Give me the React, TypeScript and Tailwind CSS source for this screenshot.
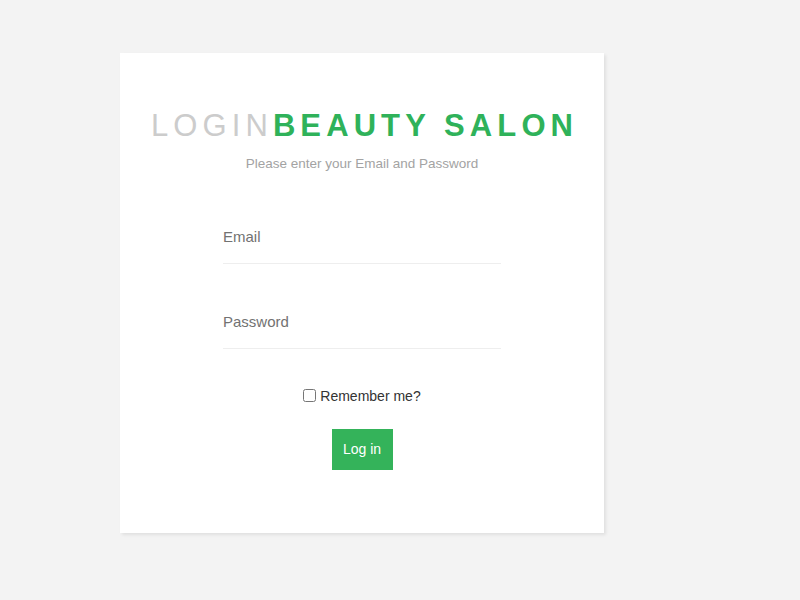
import React from "react";

const font = { fontFamily: '"Liberation Sans", Arial, sans-serif' };

const App = () => {
  return (
    <div
      className="w-[800px] h-[600px] bg-[#f3f3f3] pt-[53px] pl-[120px]"
      style={font}
    >
      <div className="w-[484px] h-[480px] bg-white shadow-[2px_2px_3px_rgba(0,0,0,0.08)] flex flex-col items-center pt-[57px]">
        <h1 className="text-[31px] leading-none tracking-[5.1px] whitespace-nowrap pl-[5px]">
          <span className="text-[#cccccc] font-normal">LOGIN</span>
          <span className="text-[#2fb25a] font-bold">BEAUTY SALON</span>
        </h1>
        <p className="mt-[16px] text-[13.5px] leading-none text-[#a3a3a3]">
          Please enter your Email and Password
        </p>
        <form className="w-[278px] mt-[40px] flex flex-col gap-[32px]">
          <input
            type="email"
            placeholder="Email"
            className="h-[53px] w-full border-b border-[#eeeeee] text-[15px] text-[#555] placeholder:text-[#727272] outline-none"
          />
          <input
            type="password"
            placeholder="Password"
            className="h-[53px] w-full border-b border-[#eeeeee] text-[15px] text-[#555] placeholder:text-[#727272] outline-none"
          />
        </form>
        <label className="mt-[40px] flex items-center gap-[4px] text-[14px] leading-none text-[#333]">
          <input type="checkbox" className="w-[13px] h-[13px]" />
          Remember me?
        </label>
        <button className="mt-[26px] w-[61px] h-[41px] bg-[#34b35a] text-white text-[14px]">
          Log in
        </button>
      </div>
    </div>
  );
};

export default App;
